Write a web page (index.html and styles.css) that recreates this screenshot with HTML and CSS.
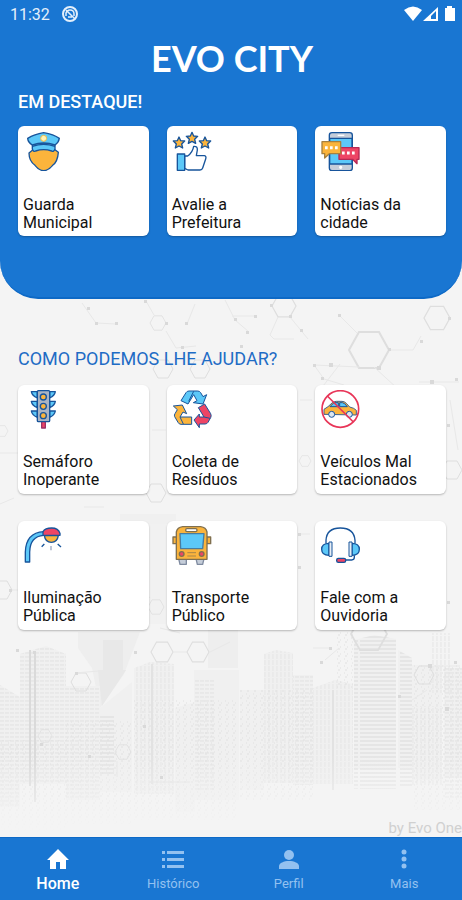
FILE: index.html
```
<!DOCTYPE html>
<html lang="pt-BR">
<head>
    <meta charset="UTF-8">
    <meta name="viewport" content="width=device-width, initial-scale=1.0">
    <title>Evo City</title>
    <link rel="stylesheet" href="styles.css">
</head>
<body>
    <div class="app">
        <header class="top">
            <div class="status">
                <span class="time">11:32</span>
                <svg class="app-dot" viewBox="0 0 16 16">
                    <circle cx="8" cy="8" r="7" fill="none" stroke="#e3effb" stroke-width="2"/>
                    <path d="M4 10V7q1-3 4-3 4 0 4 4v2M4 4l9 9M6 11h4" fill="none" stroke="#e3effb" stroke-width="1.5"/>
                </svg>
                <svg class="signals" viewBox="0 0 52 18">
                    <path d="M0 5Q9-2 18 5L9 16z" fill="#fff"/>
                    <path d="M19 16L34 2v14z" fill="#fff"/>
                    <path d="M27 11l5-5v8h-5z" fill="#1976d2"/>
                    <path d="M43 1h5v2h3v13H41V3h2z" fill="#fff"/>
                </svg>
            </div>
            <h1>EVO CITY</h1>
            <section>
                <h2>EM DESTAQUE!</h2>
                <div class="cards">
                    <a class="card" href="#guarda">
                        <svg viewBox="0 0 120 120" stroke="#17549b" stroke-width="4" stroke-linejoin="round">
                            <path d="M29 57Q62 47 97 57L106 64Q104 92 89 103Q76 119 62 119T36 103Q18 90 18 66z" fill="#fbb43c"/>
                            <path d="M28 36h68v18q-4 10-10 6Q62 52 38 60q-7 4-10-6z" fill="#5cc8f8"/>
                            <path d="M28 46Q62 34 96 46" fill="none"/>
                            <path d="M62 5Q92 10 109 22Q107 34 96 42Q62 30 28 42Q15 34 14 22Q34 10 62 5z" fill="#5cc8f8"/>
                            <circle cx="62" cy="22" r="9" fill="#fff3b4" stroke="#e8b94c" stroke-width="3"/>
                        </svg>
                        <span>Guarda Municipal</span>
                    </a>
                    <a class="card" href="#avalie">
                        <svg viewBox="0 0 120 120" stroke="#17549b" stroke-width="4" stroke-linejoin="round">
                            <g fill="#fbb43c">
                                <path id="star" d="M21 18l5 11 12 1-9 9 3 12-11-6-11 6 3-12-9-9 12-1z"/>
                                <use href="#star" x="39" y="-14"/>
                                <use href="#star" x="78"/>
                            </g>
                            <path d="M38 75h9Q62 64 65 46q12-1 11 11l-3 17h24q7 2 4 10l-9 27q-2 6-8 6H48l-10-5z" fill="#fff"/>
                            <path d="M16 69h22v49H16z" fill="#5cc8f8"/>
                        </svg>
                        <span>Avalie a Prefeitura</span>
                    </a>
                    <a class="card" href="#noticias">
                        <svg viewBox="0 0 120 120" stroke="#17549b" stroke-width="4" stroke-linejoin="round">
                            <rect x="28" y="5" width="69" height="114" rx="8" fill="#c5cdd9"/>
                            <path d="M29 22h67v77H29z" fill="#5cc8f8"/>
                            <path d="M53 13h20" stroke="#fff"/>
                            <circle cx="62" cy="109" r="3" fill="#fff" stroke="#fff"/>
                            <path d="M57 50h60v35h-6v13L98 85H57z" fill="#ee4565" stroke="#b52955"/>
                            <path d="M6 32h56v36H28L14 81V68H6z" fill="#fbb43c" stroke="#a7803f"/>
                            <path d="M15 50h8m7 0h8m7 0h8M66 66h8m7 0h8m7 0h8" stroke="#fff" stroke-width="9"/>
                        </svg>
                        <span>Notícias da cidade</span>
                    </a>
                </div>
            </section>
        </header>

        <main class="help">
            <svg class="scenery" viewBox="0 299 462 538" preserveAspectRatio="xMidYMax slice" aria-hidden="true">
                <defs>
                    <pattern id="floors" width="5" height="4" patternUnits="userSpaceOnUse">
                        <path d="M0 1h4" stroke="#e1e1e1"/>
                    </pattern>
                    <pattern id="lines" width="40" height="4" patternUnits="userSpaceOnUse">
                        <path d="M0 1h38" stroke="#dadada"/>
                    </pattern>
                    <pattern id="columns" width="4" height="6" patternUnits="userSpaceOnUse">
                        <path d="M1 0v5" stroke="#e5e5e5"/>
                    </pattern>
                    <pattern id="specks" width="7" height="7" patternUnits="userSpaceOnUse">
                        <path d="M1 1h1M4 3h1M2 5h2" stroke="#e0e0e0"/>
                    </pattern>
                    <linearGradient id="fade" x1="0" y1="0" x2="0" y2="1">
                        <stop offset="0" stop-color="#f4f4f4" stop-opacity="0"/>
                        <stop offset="1" stop-color="#f4f4f4"/>
                    </linearGradient>
                    <path id="hex" d="M-10 0l5-9H5l5 9-5 9H-5z"/>
                </defs>

                <!-- soft blocks behind the skyline -->
                <g fill="#eeeeee">
                    <path d="M78 632h62l-16 42-24 34-8-40-14-20z"/>
                    <path d="M208 630h30v38h-30z"/>
                    <path d="M120 514h56v10h-56z" opacity=".7"/>
                    <path d="M149 524h17v100h-17z" opacity=".5"/>
                </g>
                <path d="M103 640h20v30h-20zM98 670h28l-24 36z" fill="#e8e8e8"/>
                <g fill="#f0f0f0">
                    <path d="M0 685l20 12v110H0zM20 654l26-8 20 8v130H20zM66 686h34v114H66zM100 708l32-26v110h-32zM134 668l16-6 24 2v130h-40zM175 708l20-6v110h-20zM194 670h45v130h-45zM240 690h24v100h-24zM264 654l12-4 17 3v130h-29zM293 675h20v110h-20zM313 688l22-8 18 4v100h-40zM354 640l20-5 22 4v130h-42zM398 650l14 8v110h-14zM412 665h30v115h-30zM444 668h18v110h-18z"/>
                </g>
                <path d="M0 685l20 12v110H0zM20 654l26-8 20 8v130H20zM66 686h34v114H66zM194 680h20v110h-20zM293 675h20v110h-20zM444 668h18v130h-18z" fill="url(#floors)"/>
                <path d="M354 640l20-5 22 4v150h-42zM398 650l14 8v130h-14zM100 715h14v60h-14z" fill="url(#lines)"/>
                <path d="M134 668l16-6 24 2v130h-40zM264 654l12-4 17 3v130h-29zM313 688l22-8 18 4v100h-40zM412 706h30v80h-30zM432 633h20v60h-20z" fill="url(#columns)"/>
                <path d="M0 740h66v92H0zM66 720h66v104H66zM134 700h105v120H134zM240 690h73v110h-73zM335 632h18v56h-18zM412 665h50v145h-50z" fill="url(#specks)"/>
                <path d="M30 650v136M35 652v150" stroke="#dadada" stroke-width="2"/>
                <path d="M152 664v120M333 690v100" stroke="#e2e2e2" stroke-width="2"/>
                <rect y="755" width="462" height="80" fill="url(#fade)"/>

                <!-- molecules -->
                <g fill="none" stroke="#dedede">
                    <use href="#hex" transform="translate(369 350) scale(2)"/>
                    <use href="#hex" transform="translate(437 318) scale(1.3)"/>
                    <use href="#hex" transform="translate(284 306) scale(1.2)"/>
                    <use href="#hex" transform="translate(162 652) scale(1.1)"/>
                    <use href="#hex" transform="translate(198 652) scale(1.1)"/>
                    <use href="#hex" x="163" y="369"/>
                    <use href="#hex" x="200" y="369"/>
                    <use href="#hex" transform="translate(158 323) scale(.8)"/>
                    <use href="#hex" x="156" y="493"/>
                    <use href="#hex" x="2" y="590"/>
                    <use href="#hex" transform="translate(2 431) scale(.6)"/>
                    <use href="#hex" transform="translate(156 607) scale(.8)"/>
                    <use href="#hex" transform="translate(305 461) scale(.6)"/>
                    <use href="#hex" x="452" y="470"/>
                    <use href="#hex" x="424" y="675"/>
                    <use href="#hex" transform="translate(369 634) scale(1.8)"/>
                    <use href="#hex" x="81" y="682"/>
                    <use href="#hex" transform="translate(123 752) scale(.8)"/>
                    <use href="#hex" transform="translate(45 736) scale(.7)"/>
                </g>
                <g fill="none" stroke="#e8e8e8">
                    <path d="M146 301l8 14M166 331l10 17 20-2M82 303l14 20 20 1M195 304l-8 20M225 300l10 20 14 12M232 316h24M290 317l18 22M278 317l-8 18 4 4h20M357 333l-18-18M389 350h24l8-14M340 364l-20 26M359 367l-45-2 10 14 20 6M374 367l24 22M419 382h40M0 453h20M152 430h14M300 400h12M450 400l8 50M66 533h18M220 602h8M310 534h-12M10 590h10M150 598l-8-10M173 652h14M75 673l24-2M210 652l20-10M313 648h18M325 660l14-12M434 666h26M412 700l15-10M117 761v16M150 782h40M0 504l14-6M84 507h20M160 628l20 5"/>
                </g>
                <g fill="#d9d9d9">
                    <path d="M144 300h3v3h-3zM87 307h3v3h-3zM95 322h3v3h-3zM115 322h3v3h-3zM165 322h3v3h-3zM185 322h3v3h-3zM234 318h3v3h-3zM254 315h3v3h-3zM246 331h3v3h-3zM270 304h3v3h-3zM289 315h3v3h-3zM300 329h3v3h-3zM338 314h3v3h-3zM388 348h3v3h-3zM377 366h4v4h-4zM420 340h3v3h-3zM448 317h3v3h-3zM313 364h3v3h-3zM329 363h4v4h-4zM321 377h3v3h-3zM430 380h4v4h-4zM455 378h3v3h-3zM181 346h3v3h-3zM240 345h3v3h-3zM9 589h3v3H9zM298 533h3v3h-3zM298 566h3v3h-3zM447 601h3v3h-3zM447 424h3v3h-3zM16 649h3v3h-3zM33 651h3v3h-3zM75 672h3v3h-3zM134 651h3v3h-3zM143 725h3v3h-3zM40 743h3v3h-3zM320 661h3v3h-3zM329 647h3v3h-3zM454 661h3v3h-3zM445 707h4v4h-4zM428 664h4v4h-4zM398 695h3v3h-3zM88 755h3v3h-3zM160 776h3v3h-3z"/>
                </g>
            </svg>

            <section>
                <h2>COMO PODEMOS LHE AJUDAR?</h2>
                <div class="cards">
                    <a class="card" href="#semaforo">
                        <svg viewBox="0 0 120 120" stroke="#17549b" stroke-width="4" stroke-linejoin="round">
                            <path d="M56 94h11v20H56z" fill="#ee4565" stroke="#9c3267"/>
                            <path d="M43 5H25q2 12 18 19zm0 29H25q2 12 18 19zm0 29H25q2 12 18 19zM80 5h17q-2 12-17 19zm0 29h17q-2 12-17 19zm0 29h17q-2 12-17 19z" fill="#5cc8f8"/>
                            <rect x="43" y="2" width="37" height="93" rx="3" fill="#a9b4c4"/>
                            <g fill="#fbb43c">
                                <circle cx="61" cy="21" r="9"/>
                                <circle cx="61" cy="49" r="9"/>
                                <circle cx="61" cy="77" r="9"/>
                            </g>
                        </svg>
                        <span>Semáforo Inoperante</span>
                    </a>
                    <a class="card" href="#coleta">
                        <svg viewBox="0 0 120 120" stroke="#17549b" stroke-width="3" stroke-linejoin="round">
                            <path d="M27 32L42 8q3-5 9-5h26q6 0 9 5l7 12 11-6-11 28-29-4 11-6-10-18-17 28z" fill="#5cc8f8"/>
                            <path d="M65 4L50 34" fill="none"/>
                            <path d="M4 48l27-3 13 26-11-5-9 15h35v22H27q-6 0-9-6L8 80q-2-5 1-9l7-12z" fill="#fbb43c"/>
                            <path d="M24 81l10 21" fill="none"/>
                            <path d="M79 53l19-11 18 29q3 6 0 12l-8 14q-3 5-9 5H82v11L66 90l16-18v9h14z" fill="#ee4565"/>
                            <path d="M96 81l18 4" fill="none"/>
                        </svg>
                        <span>Coleta de Resíduos</span>
                    </a>
                    <a class="card" href="#veiculos">
                        <svg viewBox="0 0 120 120" stroke="#17549b" stroke-width="3" stroke-linejoin="round">
                            <path d="M12 73V58l12-8 14-13q5-3 12-3h16q7 0 13 6l10 11q14 3 20 10v14z" fill="#fbb43c" stroke="#40628c"/>
                            <path d="M30 50l12-12h13v12zm29-12h8q6 0 15 12H59z" fill="#5cc8f8"/>
                            <circle cx="35" cy="73" r="9" fill="#dce7f0"/>
                            <circle cx="88" cy="73" r="9" fill="#dce7f0"/>
                            <g fill="none" stroke="#e83558" stroke-width="5">
                                <circle cx="61" cy="57" r="55"/>
                                <path d="M22 18l78 78"/>
                            </g>
                        </svg>
                        <span>Veículos Mal Estacionados</span>
                    </a>
                    <a class="card" href="#iluminacao">
                        <svg viewBox="0 0 120 120" stroke="#17549b" stroke-width="4" stroke-linejoin="round">
                            <path d="M7 108V78Q9 20 62 17v11Q21 31 20 78v30z" fill="#5cc8f8"/>
                            <path d="M64 29h42q-3 20-21 20T64 29z" fill="#fbb43c"/>
                            <path d="M60 28V17Q66 6 86 6t25 16v6z" fill="#ee4565"/>
                            <path d="M64 54l-8 8M104 54l10 9" fill="none"/>
                            <path d="M84 60v13" stroke="#9ba8c4"/>
                        </svg>
                        <span>Iluminação Pública</span>
                    </a>
                    <a class="card" href="#transporte">
                        <svg viewBox="0 0 120 120" stroke="#80704f" stroke-width="4" stroke-linejoin="round">
                            <path d="M20 98h23v17H24zM72 98h24l-4 17H76z" fill="#c5cdd9" stroke="#7f8ba0"/>
                            <path d="M3 33h12v20H3zM104 33h12v20h-12z" fill="#fbb43c"/>
                            <path d="M13 100V18Q16 4 32 2h54q16 2 19 16v82z" fill="#fbb43c"/>
                            <rect x="41" y="8" width="34" height="9" rx="4" fill="#fff"/>
                            <path d="M24 23h72l-4 45H26z" fill="#5cc8f8" stroke="#487ca0"/>
                            <circle cx="29" cy="84" r="7" fill="#ee4565"/>
                            <circle cx="89" cy="84" r="7" fill="#ee4565"/>
                            <path d="M46 80h26M46 90h26" stroke-width="2"/>
                        </svg>
                        <span>Transporte Público</span>
                    </a>
                    <a class="card" href="#ouvidoria">
                        <svg viewBox="0 0 120 120" stroke="#17549b" stroke-width="4" stroke-linejoin="round">
                            <path d="M18 52V43Q20 6 61 6t44 37v9M103 88v6q0 8-8 8H76" fill="none"/>
                            <path d="M27 52Q5 52 5 70t22 18zM96 52q22 0 22 18T96 88z" fill="#5cc8f8"/>
                            <path d="M27 48h9v43h-9zM87 48h9v43h-9z" fill="#e8eef5" stroke-width="3"/>
                            <rect x="50" y="97" width="27" height="12" rx="5" fill="#ee4565"/>
                        </svg>
                        <span>Fale com a Ouvidoria</span>
                    </a>
                </div>
            </section>
            <p class="by">by Evo One</p>
        </main>

        <nav class="tabs">
            <a class="active" href="#home">
                <svg viewBox="0 0 24 24"><path d="M10 21v-7h4v7h6v-9h3L12 1 1 12h3v9z"/></svg>
                Home
            </a>
            <a href="#historico">
                <svg viewBox="0 0 24 24"><path d="M1 3h3v3H1zm5 0h17v3H6zM1 10h3v3H1zm5 0h17v3H6zM1 17h3v3H1zm5 0h17v3H6z"/></svg>
                Histórico
            </a>
            <a href="#perfil">
                <svg viewBox="0 0 24 24"><circle cx="12" cy="7" r="5"/><path d="M2 21v-3c0-3 5-5 10-5s10 2 10 5v3z"/></svg>
                Perfil
            </a>
            <a href="#mais">
                <svg viewBox="0 0 24 24"><circle cx="12" cy="4" r="2.500"/><circle cx="12" cy="11" r="2.500"/><circle cx="12" cy="18" r="2.500"/></svg>
                Mais
            </a>
        </nav>
    </div>
</body>
</html>
```
FILE: styles.css
```
* {
    margin: 0;
    padding: 0;
    box-sizing: border-box;
}

body {
    font-family: Roboto, "Liberation Sans", sans-serif;
    background: #f4f4f4;
    color: #111;
}

a {
    text-decoration: none;
    color: inherit;
}

.app {
    min-height: 100vh;
    display: flex;
    flex-direction: column;
}

/* header */
.top {
    position: relative;
    z-index: 1;
    padding: 0 16px 61px 18px;
    background: #1976d2;
    border-bottom: 2px solid #0d69c6;
    border-radius: 0 0 38px 38px;
    color: #fff;
}

.status {
    height: 28px;
    margin: 0 -10px 0 -8px;
    display: flex;
    align-items: center;
    gap: 12px;
    color: #e3effb;
}

.time {
    font-size: 16px;
}

.app-dot {
    width: 16px;
    height: 16px;
}

.signals {
    width: 52px;
    height: 18px;
    margin-left: auto;
}

h1 {
    margin: 10px 0 12px;
    font: bold 36px/40px Lato, sans-serif;
    text-align: center;
}

h2 {
    font-size: 18px;
    line-height: 24px;
    font-weight: 500;
}

.cards {
    display: grid;
    grid-template-columns: repeat(3, 1fr);
    gap: 27px 18px;
    margin-top: 12px;
}

.card {
    min-height: 109px;
    padding: 5px;
    display: flex;
    flex-direction: column;
    justify-content: space-between;
    background: #fff;
    border-radius: 6px;
    box-shadow: 0 1px 2px rgba(0, 0, 0, 0.25);
    color: #111;
    font-size: 16px;
    line-height: 18px;
}

.top .card {
    min-height: 110px;
    padding-bottom: 4px;
}

.card svg {
    width: 40px;
    height: 40px;
}

.card span {
    max-width: 112px;
}

/* help */
.help {
    position: relative;
    flex: 1;
    display: flex;
    flex-direction: column;
    padding: 48px 16px 0 18px;
}

.help section {
    position: relative;
}

.help h2 {
    color: #1f6cc5;
    font-weight: 400;
}

.help .cards {
    margin-top: 14px;
}

.scenery {
    position: absolute;
    top: 0;
    left: 0;
    width: 100%;
    height: 100%;
}

.by {
    position: relative;
    margin: auto -16px 0 0;
    text-align: right;
    font-size: 15px;
    line-height: 18px;
    color: #d0d0d0;
}

/* bottom bar */
.tabs {
    position: relative;
    height: 63px;
    display: flex;
    background: #1976d2;
    border-top: 1px solid #0d69c6;
}

.tabs a {
    flex: 1 1 0;
    padding-top: 10px;
    display: flex;
    flex-direction: column;
    align-items: center;
    gap: 2px;
    font-size: 13px;
    line-height: 20px;
    color: #93c1f0;
}

.tabs svg {
    width: 24px;
    height: 24px;
    fill: currentColor;
}

.tabs .active {
    color: #fff;
    font-size: 16px;
    font-weight: 500;
}
```
